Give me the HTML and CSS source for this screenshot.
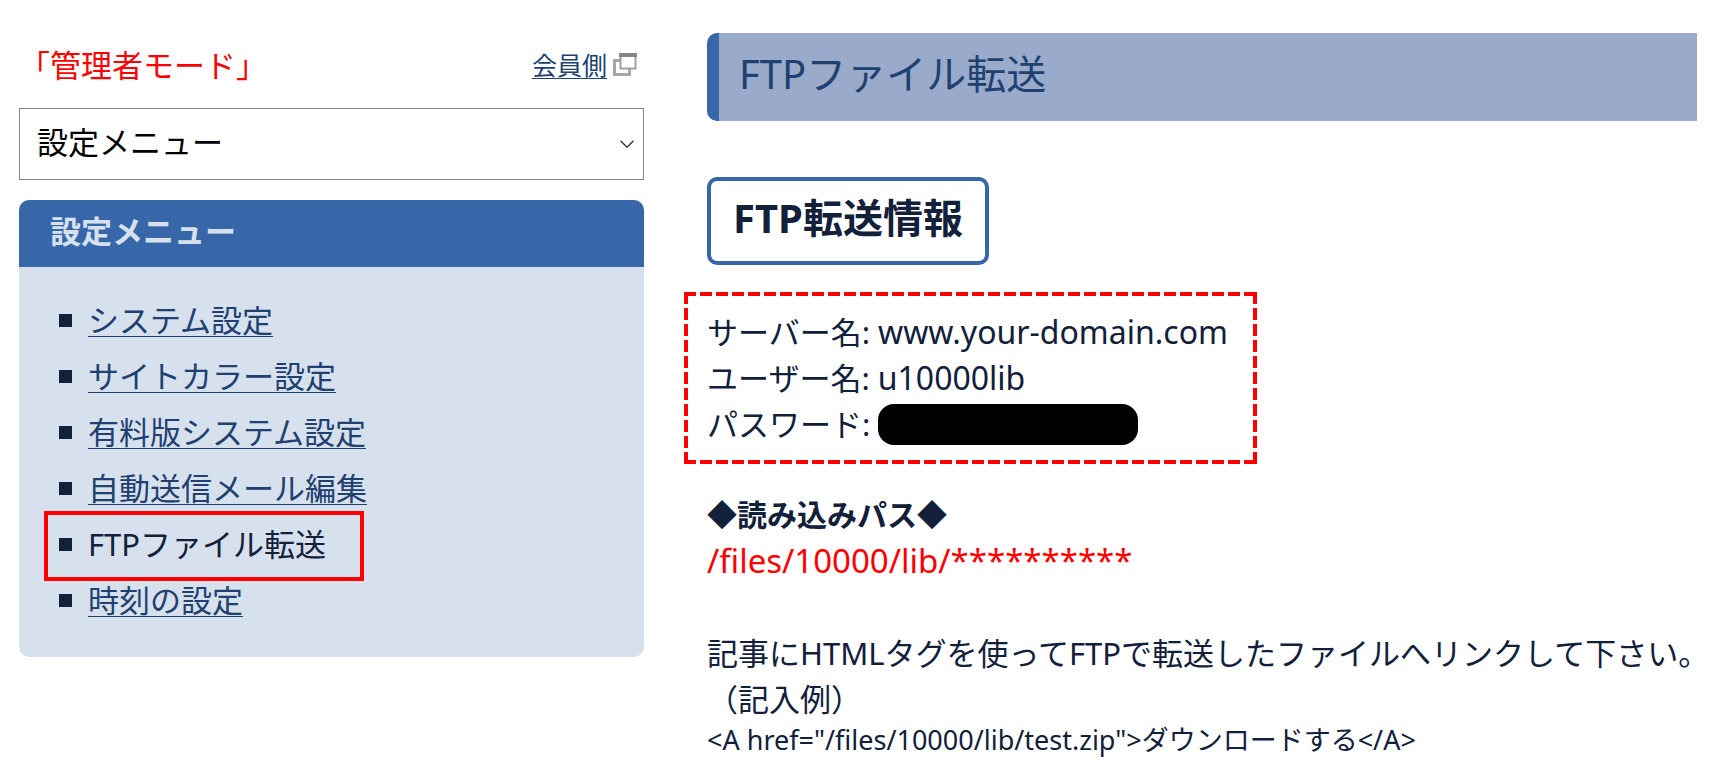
FILE: index.html
```html
<!DOCTYPE html>
<html lang="ja">
<head>
    <meta charset="UTF-8">
    <meta name="viewport" content="width=device-width, initial-scale=1.0">
    <title>FTPファイル転送</title>
    <link rel="stylesheet" href="styles.css">
</head>
<body>
    <div class="container">

        <aside class="sidebar">
            <div class="mode-bar">
                <span class="mode-name">「管理者モード」</span>
                <a class="member-link" href="#"><span>会員側</span>
                    <svg class="window-icon" width="24" height="24" viewBox="0 0 24 24" aria-hidden="true">
                        <rect x="1.5" y="7.5" width="15" height="14" fill="#fff" stroke="#a6a6a6" stroke-width="3"/>
                        <rect x="7.5" y="1.5" width="15" height="14" fill="#fff" stroke="#a0a0a0" stroke-width="2"/>
                        <rect x="6" y="0" width="18" height="4" fill="#858585"/>
                    </svg>
                </a>
            </div>

            <div class="menu-select">
                <select aria-label="メニュー選択">
                    <option>設定メニュー</option>
                </select>
                <svg class="select-arrow" width="14" height="8" viewBox="0 0 14 8" aria-hidden="true">
                    <path d="M0.5 0.7L7 7.2L13.5 0.7" fill="none" stroke="#333" stroke-width="1.4"/>
                </svg>
            </div>

            <nav class="menu">
                <h2 class="menu-title">設定メニュー</h2>
                <ul class="menu-list">
                    <li><a href="#">システム設定</a></li>
                    <li><a href="#">サイトカラー設定</a></li>
                    <li><a href="#">有料版システム設定</a></li>
                    <li><a href="#">自動送信メール編集</a></li>
                    <li class="current">FTPファイル転送</li>
                    <li><a href="#">時刻の設定</a></li>
                </ul>
            </nav>
        </aside>

        <main class="content">
            <h1 class="page-title">FTPファイル転送</h1>
            <h2 class="section-title">FTP転送情報</h2>

            <div class="ftp-info">
                <div>サーバー名: <span class="value">www.your-domain.com</span></div>
                <div>ユーザー名: <span class="value">u10000lib</span></div>
                <div class="password">パスワード:<span class="mask"></span></div>
            </div>

            <div class="path">
                <strong>◆読み込みパス◆</strong>
                <div class="path-value">/files/10000/lib/**********</div>
            </div>

            <div class="howto">
                <div>記事にHTMLタグを使ってFTPで転送したファイルへリンクして下さい。</div>
                <div>（記入例）</div>
                <code>&lt;A href="/files/10000/lib/test.zip"&gt;ダウンロードする&lt;/A&gt;</code>
            </div>
        </main>

    </div>
</body>
</html>
```

FILE: styles.css
```css
body {
    font-family: "Noto Sans", "Noto Sans CJK JP", sans-serif;
    font-size: 31px;
    line-height: 46px;
    color: #12203a;
    background-color: #ffffff;
    margin: 0;
}
h1, h2, ul {
    margin: 0;
    padding: 0;
}
a {
    color: #204070;
    text-decoration-thickness: 1px;
    text-underline-offset: 4px;
    text-decoration-skip-ink: none;
}
.container {
    display: grid;
    grid-template-columns: 625fr 990fr;
    gap: 63px;
    padding: 33px 23px 20px 19px;
}
.sidebar, .content {
    min-width: 0;
}

/* サイドバー */
.mode-bar {
    display: flex;
    justify-content: space-between;
    align-items: center;
    padding: 9px 7px 20px 0;
}
.mode-name {
    color: #ff0000;
}
.member-link {
    display: flex;
    align-items: center;
    gap: 6px;
    font-size: 25px;
    text-decoration: none;
}
.member-link span {
    text-decoration: underline;
    text-decoration-thickness: 1px;
    text-underline-offset: 3px;
}
.menu-select {
    position: relative;
    margin-bottom: 20px;
}
.menu-select select {
    appearance: none;
    display: block;
    width: 100%;
    height: 72px;
    padding: 0 40px 4px 17px;
    border: 1px solid #858585;
    border-radius: 0;
    background-color: #ffffff;
    color: #000000;
    font: inherit;
}
.select-arrow {
    position: absolute;
    right: 10px;
    top: 32px;
    pointer-events: none;
}
.menu {
    background-color: #d7e1ed;
    border-radius: 10px;
    overflow: hidden;
}
.menu-title {
    background-color: #3867a9;
    color: #d7e1ed;
    font-size: 31px;
    line-height: 46px;
    padding: 8px 31px 13px;
}
.menu-list {
    list-style: none;
    padding: 25px 25px 29px;
}
.menu-list li {
    display: flex;
    align-items: center;
    gap: 16px;
    position: relative;
    width: 320px;
    box-sizing: border-box;
    padding: 5px 0 5px 15px;
    white-space: nowrap;
}
.menu-list li::before {
    content: "";
    width: 13px;
    height: 13px;
    flex-shrink: 0;
    background-color: #12203a;
}
.menu-list .current::after {
    content: "";
    position: absolute;
    inset: -5px 0 -9px;
    border: 4px solid #ff0000;
}

/* コンテンツ */
.page-title {
    background-color: #99aacb;
    border-left: 12px solid #3867a9;
    border-radius: 10px 0 0 10px;
    color: #204070;
    font-size: 40px;
    font-weight: normal;
    line-height: 56px;
    padding: 13px 20px 19px;
    margin-bottom: 56px;
}
.section-title {
    width: fit-content;
    border: 4px solid #3867a9;
    border-radius: 10px;
    font-size: 40px;
    line-height: 56px;
    padding: 9px 22px 15px;
    margin-bottom: 27px;
}
.ftp-info {
    width: fit-content;
    padding: 17px 29px 17px 23px;
    margin: 0 0 28px -23px;
    background:
        linear-gradient(90deg, #ff0000 75%, transparent 0) 0 0 / 16px 4px repeat-x,
        linear-gradient(90deg, #ff0000 75%, transparent 0) 0 100% / 16px 4px repeat-x,
        linear-gradient(#ff0000 75%, transparent 0) 0 0 / 4px 16px repeat-y,
        linear-gradient(#ff0000 75%, transparent 0) 100% 0 / 4px 16px repeat-y;
}
.value {
    font-size: 32px;
    line-height: 1;
}
.password {
    display: flex;
    align-items: center;
    gap: 8px;
}
.mask {
    width: 260px;
    height: 41px;
    border-radius: 16px;
    background-color: #000000;
}
.path {
    margin-bottom: 46px;
}
.path strong {
    display: block;
    font-size: 30px;
}
.path-value {
    color: #ff0000;
    font-size: 33px;
}
.howto {
    white-space: nowrap;
}
.howto code {
    display: block;
    font-family: inherit;
    font-size: 27px;
    line-height: 36px;
}
```
